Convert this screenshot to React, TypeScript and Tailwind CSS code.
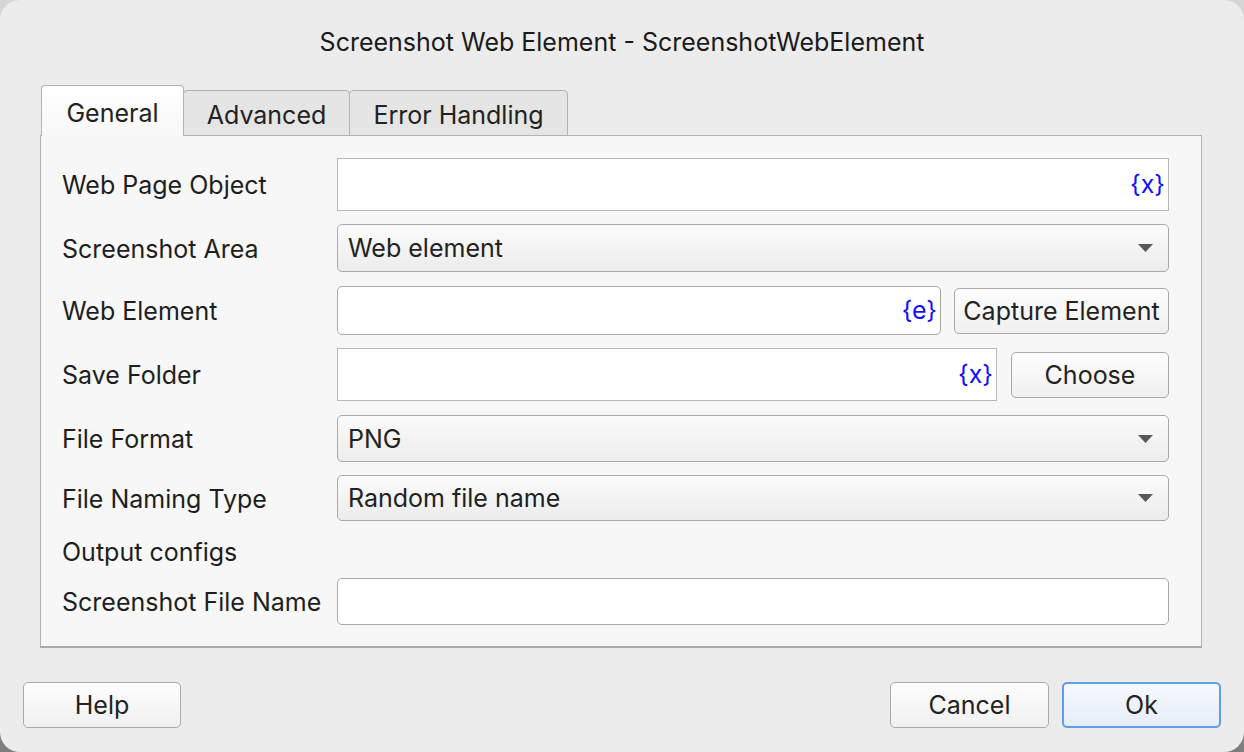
import { ReactNode } from 'react';

const font = { fontFamily: 'Inter, "Liberation Sans", Arial, sans-serif' };

function Arrow() {
  return (
    <svg width="15" height="8" viewBox="0 0 15 8" className="shrink-0">
      <path d="M0 0 L15 0 L7.5 8 Z" fill="#585858" />
    </svg>
  );
}

function Select({ value }: { value: string }) {
  return (
    <div className="flex-1 h-full flex items-center justify-between pl-[10px] pr-[15px] rounded-[5px] border border-[#a9a9a9] bg-gradient-to-b from-[#fbfbfb] to-[#ececec] text-[25px] text-[#222]">
      <span className="pt-[2px]">{value}</span>
      <Arrow />
    </div>
  );
}

function VarInput({ tag, rounded }: { tag: string; rounded?: boolean }) {
  return (
    <div
      className={
        'flex-1 h-full flex items-center justify-end pr-[3px] bg-white border ' +
        (rounded ? 'rounded-[5px] border-[#a9a9a9]' : 'border-[#b9b9b9]')
      }
    >
      <span className="text-[25px] text-[#0f0fff]">{tag}</span>
    </div>
  );
}

function Btn({ children, className = '' }: { children: ReactNode; className?: string }) {
  return (
    <div
      className={
        'flex items-center justify-center pt-[2px] rounded-[5px] border border-[#a9a9a9] bg-gradient-to-b from-[#fdfdfd] to-[#f0f0f0] text-[25px] text-[#222] ' +
        className
      }
    >
      {children}
    </div>
  );
}

function Row({ label, h, mt, children }: { label: string; h: number; mt: number; children?: ReactNode }) {
  return (
    <div className="flex items-center" style={{ height: h, marginTop: mt }}>
      <div className="w-[275px] shrink-0 pt-[3px] text-[25px] text-[#1e1e1e]">{label}</div>
      <div className="flex-1 h-full flex items-center">{children}</div>
    </div>
  );
}

export default function App() {
  return (
    <div className="w-[1244px] h-[752px] bg-gradient-to-b from-[#d6d6d6] to-[#7e7e7e]" style={font}>
      <div className="w-full h-full rounded-[20px] bg-[#ececec] flex flex-col">
        {/* Title */}
        <div className="h-[80px] pt-[24px] text-center text-[25px] text-[#1a1a1a]">
          Screenshot Web Element - ScreenshotWebElement
        </div>

        {/* Tabs */}
        <div className="h-[56px] flex items-end pl-[41px] pt-[5px] relative z-10">
          <div className="h-[51px] w-[143px] flex items-center justify-center pt-[5px] rounded-t-[4px] border border-b-0 border-[#b2b2b2] bg-gradient-to-b from-white to-[#f7f7f7] text-[25px] text-[#222]">
            General
          </div>
          <div className="h-[46px] w-[167px] -ml-px flex items-center justify-center pt-[5px] rounded-t-[4px] border border-[#b2b2b2] bg-[#e5e5e5] text-[25px] text-[#222]">
            Advanced
          </div>
          <div className="h-[46px] w-[219px] -ml-px flex items-center justify-center pt-[5px] rounded-t-[4px] border border-[#b2b2b2] bg-[#e5e5e5] text-[25px] text-[#222]">
            Error Handling
          </div>
        </div>

        {/* Panel */}
        <div className="ml-[40px] mr-[42px] -mt-px h-[513px] border border-[#b2b2b2] border-b-2 border-b-[#a9a9a9] bg-[#f7f7f7] pl-[21px] pr-[32px] flex flex-col">
          <Row label="Web Page Object" h={53} mt={22}>
            <VarInput tag="{x}" />
          </Row>
          <Row label="Screenshot Area" h={48} mt={13}>
            <Select value="Web element" />
          </Row>
          <Row label="Web Element" h={49} mt={14}>
            <VarInput tag="{e}" rounded />
            <Btn className="ml-[13px] w-[215px] h-[46px]">Capture Element</Btn>
          </Row>
          <Row label="Save Folder" h={53} mt={13}>
            <VarInput tag="{x}" />
            <Btn className="ml-[14px] w-[158px] h-[46px]">Choose</Btn>
          </Row>
          <Row label="File Format" h={47} mt={14}>
            <Select value="PNG" />
          </Row>
          <Row label="File Naming Type" h={46} mt={13}>
            <Select value="Random file name" />
          </Row>
          <Row label="Output configs" h={30} mt={15} />
          <Row label="Screenshot File Name" h={47} mt={12}>
            <div className="flex-1 h-full rounded-[5px] border-[1.5px] border-[#a9a9a9] bg-white" />
          </Row>
        </div>

        {/* Footer buttons */}
        <div className="flex items-center justify-between px-[23px] mt-[34px]">
          <Btn className="w-[158px] h-[46px]">Help</Btn>
          <div className="flex gap-[13px]">
            <Btn className="w-[159px] h-[46px]">Cancel</Btn>
            <div className="w-[159px] h-[46px] flex items-center justify-center pt-[2px] rounded-[5px] border-2 border-[#5c9ded] bg-gradient-to-b from-[#f6f9fe] to-[#e6edf8] text-[25px] text-[#222]">
              Ok
            </div>
          </div>
        </div>
      </div>
    </div>
  );
}
